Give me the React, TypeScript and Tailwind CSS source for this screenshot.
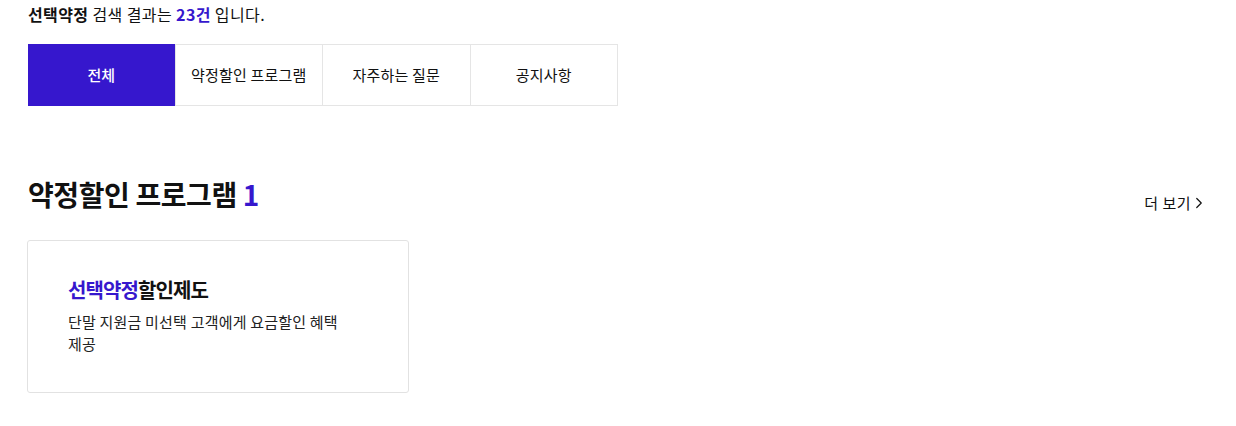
import { ChevronRight } from "lucide-react";

const tabs = ["전체", "약정할인 프로그램", "자주하는 질문", "공지사항"];

function App() {
  return (
    <div
      className="bg-white min-h-screen px-[28px] pt-[4px] text-[#111]"
      style={{ fontFamily: '"Noto Sans CJK KR", "Noto Sans", sans-serif' }}
    >
      <div className="text-[16px] leading-[20px] tracking-[0.4px]">
        <span className="font-bold">선택약정</span> 검색 결과는{" "}
        <span className="font-bold text-[#3617cd]">23건</span> 입니다.
      </div>

      <div className="flex mt-[20px] w-[590px] h-[62px] border border-[#e5e5e5]">
        {tabs.map((t, i) => (
          <div
            key={t}
            className={
              i === 0
                ? "flex-1 flex items-center justify-center bg-[#3617cd] text-white font-medium text-[15px] -my-px -ml-px"
                : "flex-1 flex items-center justify-center text-[15px] tracking-[0.2px] border-l border-[#e5e5e5]"
            }
          >
            {t}
          </div>
        ))}
      </div>

      <div className="flex items-end justify-between mt-[68px] w-[1180px]">
        <h2 className="text-[28px] font-bold leading-[40px] tracking-[-0.4px]">
          약정할인 프로그램 <span className="text-[#3617cd]">1</span>
        </h2>
        <div className="flex items-center text-[15px] leading-[20px] mb-[1px] tracking-[0.5px]">
          더 보기
          <ChevronRight className="w-[18px] h-[18px] -ml-[1px]" strokeWidth={1.6} />
        </div>
      </div>

      <div className="mt-[26px] w-[382px] h-[153px] border border-[#e2e2e2] rounded-[3px] px-[40px] pt-[34px] -ml-px">
        <div className="text-[20px] font-bold leading-[30px] tracking-[-0.9px]">
          <span className="text-[#3617cd]">선택약정</span>할인제도
        </div>
        <p className="mt-[6px] w-[290px] break-keep text-[15px] leading-[22px] tracking-[0.2px] text-[#222]">
          단말 지원금 미선택 고객에게 요금할인 혜택 제공
        </p>
      </div>
    </div>
  );
}

export default App;
